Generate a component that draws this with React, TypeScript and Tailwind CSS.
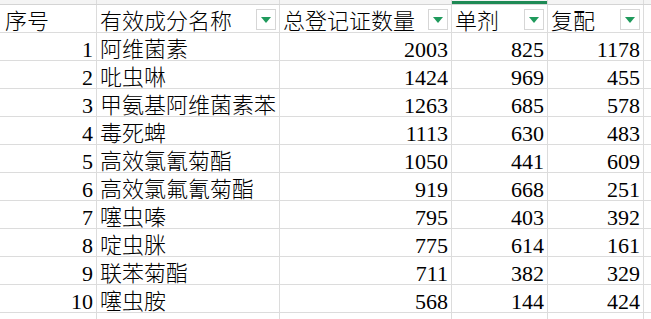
import React from "react";

const rows: [number, string, number, number, number][] = [
  [1, "阿维菌素", 2003, 825, 1178],
  [2, "吡虫啉", 1424, 969, 455],
  [3, "甲氨基阿维菌素苯", 1263, 685, 578],
  [4, "毒死蜱", 1113, 630, 483],
  [5, "高效氯氰菊酯", 1050, 441, 609],
  [6, "高效氯氟氰菊酯", 919, 668, 251],
  [7, "噻虫嗪", 795, 403, 392],
  [8, "啶虫脒", 775, 614, 161],
  [9, "联苯菊酯", 711, 382, 329],
  [10, "噻虫胺", 568, 144, 424],
];

const font = {
  fontFamily: '"Liberation Serif", "Noto Sans CJK SC", serif',
};

function Filter() {
  return (
    <div className="absolute right-[3px] bottom-[2px] w-[20px] h-[21px] border border-[#d6d6d6] bg-white flex items-center justify-center">
      <svg width="10" height="6" viewBox="0 0 10 6">
        <polygon points="0,0 10,0 5,6" fill="#1f9a5c" />
      </svg>
    </div>
  );
}

const widths = ["w-[97px]", "w-[183px]", "w-[172px]", "w-[96px]", "w-[96px]"];

function Cell({
  w,
  children,
  right,
  filter,
  first,
}: {
  w: string;
  children?: React.ReactNode;
  right?: boolean;
  filter?: boolean;
  first?: boolean;
}) {
  return (
    <div
      className={`relative ${w} shrink-0 h-full border-r border-[#dcdcdc] flex items-end ${
        right ? "justify-end pr-[3px]" : first ? "pl-[5px]" : "pl-[3px]"
      }`}
    >
      <span className="leading-[20px] whitespace-nowrap">{children}</span>
      {filter && <Filter />}
    </div>
  );
}

function Tail() {
  return <div className="flex-1 h-full" />;
}

export default function App() {
  return (
    <div
      className="w-[651px] h-[319px] overflow-hidden bg-white text-black text-[22px] font-light"
      style={font}
    >
      {/* top strip (column header bottom) */}
      <div className="flex h-[5px] border-b border-[#d4d4d4] bg-[#f4f4f4]">
        <div className="w-[97px] shrink-0 h-full border-r border-[#dcdcdc]" />
        <div className="w-[183px] shrink-0 h-full border-r border-[#dcdcdc]" />
        <div className="w-[172px] shrink-0 h-full border-r border-[#dcdcdc]" />
        <div className="w-[96px] shrink-0 h-full border-r border-[#dcdcdc] pt-[1px]">
          <div className="h-[3px] bg-[#1e8a55]" />
        </div>
        <div className="w-[96px] shrink-0 h-full border-r border-[#dcdcdc]" />
        <Tail />
      </div>
      {/* header */}
      <div className="flex h-[28px] border-b border-[#dcdcdc]">
        <Cell w={widths[0]} first>
          序号
        </Cell>
        <Cell w={widths[1]} filter>
          有效成分名称
        </Cell>
        <Cell w={widths[2]} filter>
          总登记证数量
        </Cell>
        <Cell w={widths[3]} filter>
          单剂
        </Cell>
        <Cell w={widths[4]} filter>
          复配
        </Cell>
        <Tail />
      </div>
      {rows.map((r) => (
        <div key={r[0]} className="flex h-[28px] border-b border-[#dcdcdc]">
          <Cell w={widths[0]} right>
            {r[0]}
          </Cell>
          <Cell w={widths[1]}>{r[1]}</Cell>
          <Cell w={widths[2]} right>
            {r[2]}
          </Cell>
          <Cell w={widths[3]} right>
            {r[3]}
          </Cell>
          <Cell w={widths[4]} right>
            {r[4]}
          </Cell>
          <Tail />
        </div>
      ))}
      <div className="flex h-[28px]">
        <Cell w={widths[0]} />
        <Cell w={widths[1]} />
        <Cell w={widths[2]} />
        <Cell w={widths[3]} />
        <Cell w={widths[4]} />
        <Tail />
      </div>
    </div>
  );
}
